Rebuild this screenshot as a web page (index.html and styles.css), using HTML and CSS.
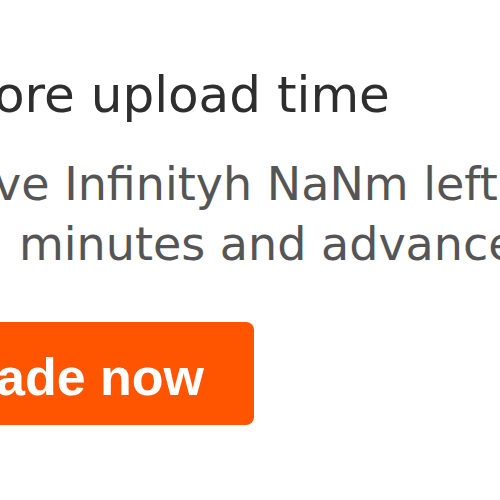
FILE: index.html
```html
<!DOCTYPE html>
<html lang="en">
<head>
    <meta charset="UTF-8">
    <title>Upload time</title>
    <link rel="stylesheet" href="styles.css">
</head>
<body>
<div class="upsell">
    <h2 class="upsell-title">ore upload time</h2>
    <p class="upsell-text">
        <span class="line">ve Infinityh NaNm left</span>
        <span class="line line-2">minutes and advanced stats</span>
    </p>
    <a class="upsell-btn" href="#">ade now</a>
</div>
</body>
</html>
```

FILE: styles.css
```css
*{
    margin: 0;
    padding: 0;
}
html,body{
    width: 500px;
    height: 500px;
    overflow: hidden;
    background: #fff;
}
.upsell{
    margin-left: -6px;
    padding-top: 66px;
    font-family: "DejaVu Sans", Verdana, sans-serif;
    white-space: nowrap;
}
.upsell-title{
    font-size: 50px;
    font-weight: normal;
    line-height: 58px;
    color: #2e2e2e;
}
.upsell-text{
    margin-top: 30px;
    font-size: 46px;
    line-height: 60px;
    color: #555;
}
.upsell-text .line{
    display: block;
}
.upsell-text .line-2{
    padding-left: 25px;
}
.upsell-btn{
    display: inline-block;
    margin-top: 48px;
    margin-left: -20px;
    padding: 0 50px 0 22px;
    height: 103px;
    line-height: 110px;
    background: #f50;
    border-radius: 8px;
    color: #fff;
    font-family: "Liberation Sans", Arial, sans-serif;
    font-size: 52px;
    font-weight: bold;
    text-decoration: none;
}
```
